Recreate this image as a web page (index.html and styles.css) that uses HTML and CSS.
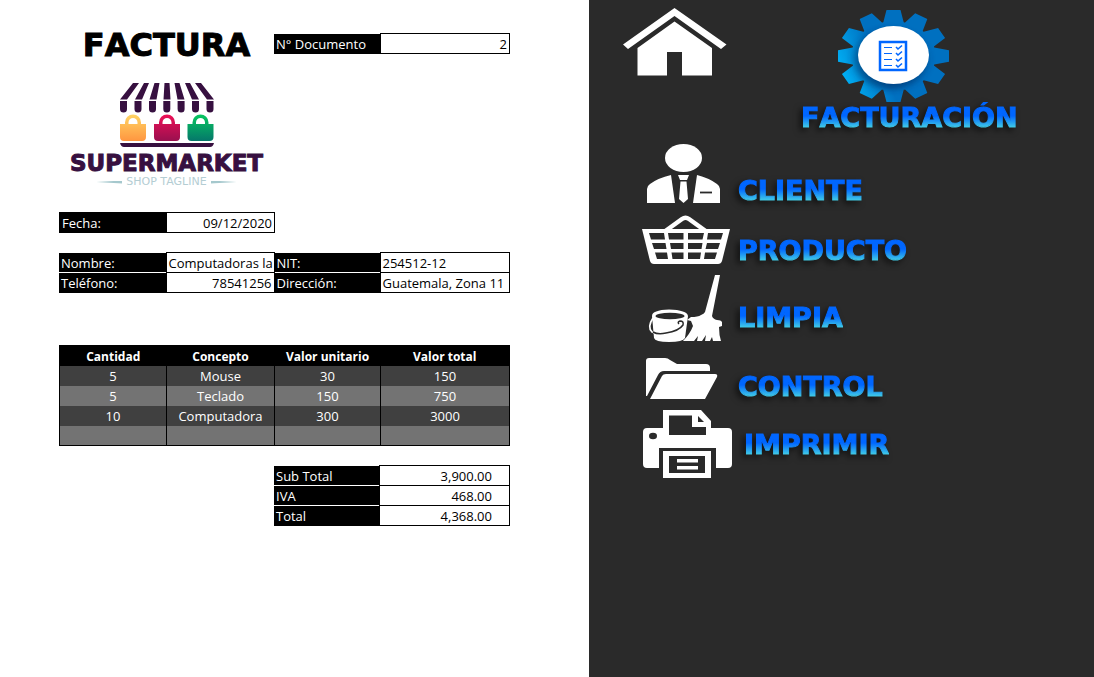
FILE: index.html
```html
<!DOCTYPE html>
<html lang="es">
<head>
<meta charset="utf-8">
<meta name="viewport" content="width=device-width, initial-scale=1">
<title>Factura</title>
<link rel="stylesheet" href="styles.css">
</head>
<body>
<main class="sheet">
  <header class="head">
    <div class="brand">
      <h1 class="title">FACTURA</h1>
      <svg class="awning" viewBox="0 0 94 66" aria-hidden="true">
        <defs>
          <linearGradient id="bagA" x1="0" y1="0" x2="0" y2="1"><stop offset="0" stop-color="#ffd565"/><stop offset="1" stop-color="#ff9640"/></linearGradient>
          <linearGradient id="bagB" x1="0" y1="0" x2="0" y2="1"><stop offset="0" stop-color="#ee1057"/><stop offset="1" stop-color="#99104f"/></linearGradient>
          <linearGradient id="bagC" x1="0" y1="0" x2="0" y2="1"><stop offset="0" stop-color="#08c760"/><stop offset="1" stop-color="#05776a"/></linearGradient>
          <path id="flap" d="M0 19h7v8a3.500 3.500 0 0 1-7 0z"/>
          <path id="bag" fill-rule="evenodd" d="M0 42h5v-1.500a8 8 0 0 1 16 0V42h5v13q0 4-4 4H4q-4 0-4-4zM8.500 42h9v-1.500a4.500 4.500 0 0 0-9 0z"/>
        </defs>
        <g fill="#371040">
          <path d="M13 1h6L7 17.500H0zM24 1h5l-7 16.500h-7zM34.500 1h5L36.500 17.500h-7zM44.500 1h5l1 16.500h-7zM54.500 1h5l5 16.500h-7zM65 1h5l9 16.500h-7zM75 1h6l13 16.500h-7z"/>
          <use href="#flap"/><use href="#flap" x="14.500"/><use href="#flap" x="29"/><use href="#flap" x="43.300"/><use href="#flap" x="57.600"/><use href="#flap" x="72"/><use href="#flap" x="86.500"/>
          <path d="M0 61h94q-1 4-4 4H4q-3 0-4-4z"/>
        </g>
        <use href="#bag" fill="url(#bagA)"/>
        <use href="#bag" x="34" fill="url(#bagB)"/>
        <use href="#bag" x="67.500" fill="url(#bagC)"/>
      </svg>
      <p class="brand-name">SUPERMARKET</p>
      <p class="tagline">SHOP TAGLINE</p>
    </div>
    <table class="form doc">
      <colgroup><col class="c3"><col></colgroup>
      <tr><th scope="row">N° Documento</th><td class="num">2</td></tr>
    </table>
  </header>

  <table class="form date">
    <colgroup><col class="c1"><col class="c2"></colgroup>
    <tr><th scope="row">Fecha:</th><td class="num">09/12/2020</td></tr>
  </table>

  <table class="form client">
    <colgroup><col class="c1"><col class="c2"><col class="c3"><col></colgroup>
    <tr><th scope="row">Nombre:</th><td>Computadoras la</td><th scope="row">NIT:</th><td>254512-12</td></tr>
    <tr><th scope="row">Teléfono:</th><td class="num">78541256</td><th scope="row">Dirección:</th><td>Guatemala, Zona 11</td></tr>
  </table>

  <table class="items">
    <colgroup><col class="c1"><col class="c2"><col class="c3"><col></colgroup>
    <thead><tr><th scope="col">Cantidad</th><th scope="col">Concepto</th><th scope="col">Valor unitario</th><th scope="col">Valor total</th></tr></thead>
    <tbody>
      <tr><td>5</td><td>Mouse</td><td>30</td><td>150</td></tr>
      <tr><td>5</td><td>Teclado</td><td>150</td><td>750</td></tr>
      <tr><td>10</td><td>Computadora</td><td>300</td><td>3000</td></tr>
      <tr><td></td><td></td><td></td><td></td></tr>
    </tbody>
  </table>

  <table class="form totals">
    <colgroup><col class="c3"><col></colgroup>
    <tr><th scope="row">Sub Total</th><td class="num">3,900.00</td></tr>
    <tr><th scope="row">IVA</th><td class="num">468.00</td></tr>
    <tr><th scope="row">Total</th><td class="num">4,368.00</td></tr>
  </table>
</main>

<nav class="panel" aria-label="Menú">
  <div class="top">
    <button class="plain" type="button" aria-label="Inicio">
      <svg class="home" viewBox="0 0 104 69" fill="#fff" aria-hidden="true">
        <path d="M51.500 0 103.500 36.500 98 41 51.500 8 5 41 0 36.500z"/>
        <path d="M51.500 13.500 89 40v27.500H59V44H44v23.500H14.500V40z"/>
      </svg>
    </button>
    <button class="plain billing" type="button">
      <svg class="gear" viewBox="0 0 112 94" aria-hidden="true">
        <defs>
          <linearGradient id="gearFill" gradientUnits="userSpaceOnUse" x1="-56" y1="20" x2="-14" y2="5"><stop offset="0" stop-color="#00b4f8"/><stop offset="1" stop-color="#0070c0"/></linearGradient>
          <clipPath id="gearShape">
            <circle r="42"/>
            <path id="t" d="M-11-37-7-55.500H7L11-37z"/>
            <use href="#t" transform="rotate(30)"/><use href="#t" transform="rotate(60)"/><use href="#t" transform="rotate(90)"/><use href="#t" transform="rotate(120)"/><use href="#t" transform="rotate(150)"/><use href="#t" transform="rotate(180)"/><use href="#t" transform="rotate(210)"/><use href="#t" transform="rotate(240)"/><use href="#t" transform="rotate(270)"/><use href="#t" transform="rotate(300)"/><use href="#t" transform="rotate(330)"/>
          </clipPath>
          <filter id="soft" x="-30%" y="-30%" width="160%" height="160%"><feGaussianBlur stdDeviation="4"/></filter>
        </defs>
        <g transform="translate(55.500 48) scale(1 .83)">
          <g clip-path="url(#gearShape)">
            <rect x="-56" y="-56" width="112" height="112" fill="url(#gearFill)"/>
            <ellipse cx="-3" cy="4" rx="36" ry="36" fill="#002c60" opacity=".6" filter="url(#soft)"/>
          </g>
        </g>
        <ellipse cx="55.500" cy="47" rx="35.500" ry="29" fill="#fff"/>
        <g fill="none" stroke="#0066ff">
          <rect x="42" y="34" width="26" height="28" stroke-width="2.500"/>
          <path stroke-width="1.200" d="M46 39.500h8M46 45.500h8M46 51.500h8M46 57.500h8"/>
          <path stroke-width="1.600" d="m58 39 2 2 4-3.500M58 45l2 2 4-3.500M58 51l2 2 4-3.500M58 57l2 2 4-3.500"/>
        </g>
      </svg>
      <span class="label">FACTURACIÓN</span>
    </button>
  </div>

  <div class="menu">
    <button class="plain item" type="button">
      <svg class="icon" viewBox="0 0 90 62" fill="#fff" aria-hidden="true">
        <ellipse cx="41.500" cy="14" rx="18.500" ry="14"/>
        <path d="M5 59V45q0-3 3-5 8-6 21-9l4 28zM78 59V45q0-3-3-5-8-6-20-9l-4 28z"/>
        <path d="M36 31h11l-2 5h-7zM38.500 37.500h6L46 55l-4.500 4-4.500-4z"/>
        <path d="M58 48.500h12" stroke="#2a2a2a" stroke-width="1.800"/>
      </svg>
      <span class="label">CLIENTE</span>
    </button>
    <button class="plain item" type="button">
      <svg class="icon" viewBox="0 0 90 52" aria-hidden="true">
        <path d="M22 18 40 5q3.500-2.500 7 0l18 13" fill="none" stroke="#fff" stroke-width="4.500"/>
        <path fill="#fff" fill-rule="evenodd" d="M0 15h88L80 47q-1 3-4 3H12q-3 0-4-3zM7 19l2 6.500h14L22 19zM26 19l1 6.500h14.500V19zM46 19v6.500h14.500L62 19zM66 19l-1 6.500h14L81 19zM10 29l2 6h12.500l-1-6zM28 29l1 6h12.500v-6zM46 29v6h13.500l1-6zM65 29l-1.500 6H76l2-6zM13 38.500l2 6.500h11l-1-6.500zM29.500 38.500l1 6.500h11v-6.500zM46 38.500V45h12l1-6.500zM63 38.500l-1 6.500h11l2-6.500z"/>
      </svg>
      <span class="label">PRODUCTO</span>
    </button>
    <button class="plain item" type="button">
      <svg class="icon" viewBox="0 0 90 68" aria-hidden="true">
        <path fill="#fff" d="M73 1h5l-8 41q1 3 5 4 4 0 5 2v4l-3 1q0 8 2 14h-8l-1-4-2 4h-5l1-6-4 6h-5l1-5-4 5h-11q7-7 10-15l-2-5-4-1 4-3q7 0 10-2 3-1 4-3z"/>
        <path fill="#fff" d="M10 42q0-6 17-6.500Q45 36 46 42l-3 22q-2 4-16 4t-15-4z"/>
        <ellipse cx="28" cy="42" rx="14.500" ry="3.300" fill="#2a2a2a"/>
        <path fill="none" stroke="#fff" stroke-width="1.700" d="M11 44Q5 53 10 58q4 2 8 2"/>
        <path fill="none" stroke="#2a2a2a" stroke-width="1.500" d="M11 58q5 3 13 1 13-2 17-8 1-4-3-4-3 1-1 3"/>
      </svg>
      <span class="label raised">LIMPIA</span>
    </button>
    <button class="plain item" type="button">
      <svg class="icon" viewBox="0 0 90 52" fill="#fff" aria-hidden="true">
        <path d="M4 46V11q0-3 3-3h16q3 0 5 2l7 4h29q4 0 4 4v3H22q-4 0-6 4L5 46z"/>
        <path d="m8 49 12-23q1-2 4-2h49q3 0 2 3L63 49z"/>
      </svg>
      <span class="label">CONTROL</span>
    </button>
    <button class="plain item wide" type="button">
      <svg class="icon" viewBox="0 0 90 68" fill="#fff" aria-hidden="true">
        <path fill-rule="evenodd" d="M21 0h38l10 11v7h17q4 0 4 4v32q0 4-4 4H74V38H17v20H5q-4 0-4-4V22q0-4 4-4h16zM27 5.500V25h37v-8H50V5.500z"/>
        <path fill="#2a2a2a" d="M56 6v6h6z"/>
        <ellipse cx="11" cy="26" rx="4" ry="3.300" fill="#2a2a2a"/>
        <path fill-rule="evenodd" d="M21 41h48v27H21zM27 46v17h36V46z"/>
        <path d="M35 49h21v3.500H35zM35 56h21v3.500H35z"/>
      </svg>
      <span class="label">IMPRIMIR</span>
    </button>
  </div>
</nav>
</body>
</html>
```

FILE: styles.css
```css
* { box-sizing: border-box; }

body {
  margin: 0;
  min-height: 100vh;
  display: grid;
  grid-template-columns: 589fr 505fr;
  background: #fff;
  color: #000;
  font-family: "Open Sans", "Noto Sans", sans-serif;
  font-size: 13px;
}

/* Invoice */
.sheet { padding: 33px 79px 33px 59px; }
.head { display: flex; align-items: flex-start; margin-bottom: 24px; }
.brand {
  flex: 0 0 215px;
  display: flex;
  flex-direction: column;
  align-items: center;
}
.title {
  margin: 0 0 24px;
  font: bold 32px/25px "DejaVu Sans", sans-serif;
  font-kerning: none;
  -webkit-text-stroke: 1px #000;
}
.awning { display: block; width: 94px; height: 66px; }
.brand-name {
  margin: 4px 0 2px;
  color: #371040;
  font: bold 23px/22px "DejaVu Sans", sans-serif;
  -webkit-text-stroke: 1px #371040;
}
.tagline {
  display: flex;
  align-items: center;
  gap: 4px;
  margin: 0;
  color: #b4cdd3;
  font: 11px/12px "DejaVu Sans", sans-serif;
}
.tagline::before,
.tagline::after {
  content: "";
  width: 26px;
  height: 3px;
  background: #a5c8cd;
  clip-path: polygon(0 50%, 100% 0, 100% 100%);
}
.tagline::after { clip-path: polygon(100% 50%, 0 0, 0 100%); }

table { border-collapse: collapse; table-layout: fixed; width: 100%; }
.c1 { width: 107px; }
.c2 { width: 108px; }
.c3 { width: 106px; }
th, td {
  height: 20px;
  padding: 2px 2px 0;
  line-height: 17px;
  white-space: nowrap;
  overflow: hidden;
}
.form th {
  background: #000;
  color: #fff;
  font-weight: 400;
  text-align: left;
}
.form tr + tr th { border-top: 1px solid #fff; }
.form td { border: 1px solid #000; }
.form .num { text-align: right; }
.doc { flex: 1; }
.date { width: 216px; margin-bottom: 19px; }
.date th { border: 1px solid #000; }
.client { margin-bottom: 52px; }
.items { margin-bottom: 19px; border: 1px solid #000; text-align: center; }
.items th { background: #000; color: #fff; font-size: 12px; font-weight: 700; }
.items td { border: solid #000; border-width: 0 1px; color: #fff; background: #404040; }
.items tbody tr:nth-child(even) td { background: #737373; }
.totals { width: auto; margin-left: 215px; min-width: 236px; }
.totals .num { width: 130px; padding-right: 17px; }
.totals th { width: 106px; }

/* Menu panel */
.panel { background: #2a2a2a; padding: 8px 32px 32px 34px; }
.plain {
  display: flex;
  padding: 0;
  border: 0;
  background: none;
  cursor: pointer;
}
.plain svg { display: block; flex: none; }
.top { display: flex; align-items: flex-start; gap: 74px; margin-bottom: 11px; }
.home { width: 104px; height: 69px; }
.billing { flex-direction: column; align-items: flex-start; }
.gear { width: 112px; height: 94px; margin-left: 37px; }
.label {
  font: bold 27px/31px "DejaVu Sans", sans-serif;
  font-kerning: none;
  -webkit-text-stroke: 1px transparent;
  background: linear-gradient(#0066ff 45%, #46d4e4 85%);
  background-clip: text;
  -webkit-background-clip: text;
  color: transparent;
  filter: drop-shadow(-3px 3px 3px rgba(0, 0, 0, .6));
}
.menu {
  display: flex;
  flex-direction: column;
  align-items: flex-start;
  gap: 8px;
  padding-left: 19px;
}
.item { align-items: flex-end; gap: 6px; }
.wide { align-items: center; gap: 12px; }
.icon { width: 90px; height: auto; }
.raised { margin-bottom: 9px; }
```
